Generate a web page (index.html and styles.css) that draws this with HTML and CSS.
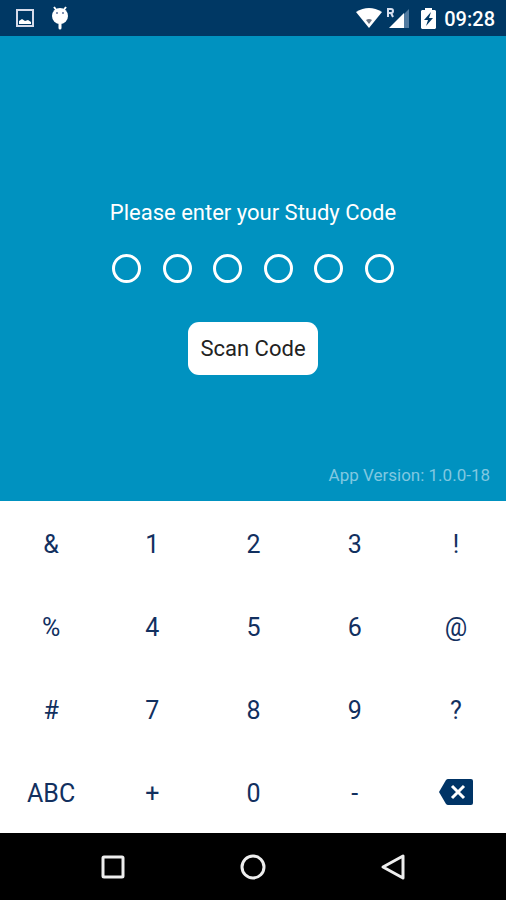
FILE: index.html
```
<!DOCTYPE html>
<html lang="en">
  <head>
    <meta charset="utf-8">
    <meta name="viewport" content="width=device-width, initial-scale=1">
    <title>Study Code</title>
    <link rel="stylesheet" href="styles.css">
  </head>
  <body>
    <header class="status-bar">
      <div class="status-group notifications">
        <svg width="18" height="18" viewBox="0 0 18 18" aria-hidden="true">
          <rect x="1" y="1" width="16" height="16" fill="none" stroke="#d6dbea" stroke-width="2" />
          <path d="M3 15v-3l3-2 3 2 3-1 3 2v2z" fill="#fff" />
        </svg>
        <svg width="18" height="24" viewBox="0 0 18 24" aria-hidden="true">
          <path d="M3 1l3 4M15 1l-3 4" stroke="#fff" stroke-width="2" />
          <circle cx="9" cy="10" r="8" fill="#fff" />
          <path d="M9 16v6" stroke="#fff" stroke-width="3" stroke-linecap="round" />
          <path d="M5 7h2M11 7h2" stroke="#8795b4" stroke-width="2" />
        </svg>
      </div>
      <div class="status-group">
        <svg width="26" height="20" viewBox="0 0 26 20" aria-hidden="true">
          <path d="M0 4Q13-4 26 4L13 20z" fill="#fff" />
          <path d="M10 12q3-2 6 0l-3 4z" fill="#6d7482" />
        </svg>
        <svg width="23" height="20" viewBox="0 0 23 20" aria-hidden="true">
          <path d="M1 9V1h3q2 0 2 2t-2 2H1M4 5l2 4" fill="none" stroke="#d6dfef" stroke-width="2" />
          <path d="M17 6l5-5v19h-5z" fill="#527ba0" />
          <path d="M2 20L17 5v15z" fill="#fff" />
        </svg>
        <svg class="battery" width="15" height="21" viewBox="0 0 15 21" aria-hidden="true">
          <path d="M1 2h3V0h7v2h3l1 1v17l-1 1H1l-1-1V3z" fill="#fff" />
          <path d="M10 4l-7 8h4l-2 6 7-8H8z" fill="#003864" />
        </svg>
        <time class="clock">09:28</time>
      </div>
    </header>

    <main class="entry">
      <h1 class="prompt">Please enter your Study Code</h1>
      <div class="slots" role="img" aria-label="0 of 6 characters entered">
        <span class="slot"></span>
        <span class="slot"></span>
        <span class="slot"></span>
        <span class="slot"></span>
        <span class="slot"></span>
        <span class="slot"></span>
      </div>
      <button class="scan" type="button">Scan Code</button>
      <p class="version">App Version: 1.0.0-18</p>
    </main>

    <section class="keypad" aria-label="Keypad">
      <button type="button">&amp;</button>
      <button type="button">1</button>
      <button type="button">2</button>
      <button type="button">3</button>
      <button type="button">!</button>
      <button type="button">%</button>
      <button type="button">4</button>
      <button type="button">5</button>
      <button type="button">6</button>
      <button type="button">@</button>
      <button type="button">#</button>
      <button type="button">7</button>
      <button type="button">8</button>
      <button type="button">9</button>
      <button type="button">?</button>
      <button type="button">ABC</button>
      <button type="button">+</button>
      <button type="button">0</button>
      <button type="button">-</button>
      <button type="button" aria-label="Delete">
        <svg width="34" height="26" viewBox="0 0 34 26">
          <path d="M9 0h23q2 0 2 2v22q0 2-2 2H9q-1 0-2-1L0 13 7 1q1-1 2-1z" fill="#003466" />
          <path d="M13 7l12 12M25 7L13 19" stroke="#fff" stroke-width="3" />
        </svg>
      </button>
    </section>

    <nav class="nav-bar" aria-label="System">
      <button type="button" aria-label="Recent apps">
        <svg width="28" height="28" viewBox="0 0 28 28">
          <rect x="4" y="4" width="20" height="20" rx="1" />
        </svg>
      </button>
      <button type="button" aria-label="Home">
        <svg width="28" height="28" viewBox="0 0 28 28">
          <circle cx="14" cy="14" r="11" />
        </svg>
      </button>
      <button type="button" aria-label="Back">
        <svg width="28" height="28" viewBox="0 0 28 28">
          <path d="M24 3v22L4 14z" />
        </svg>
      </button>
    </nav>
  </body>
</html>
```
FILE: styles.css
```
* {
  box-sizing: border-box;
}

body {
  margin: 0;
  min-height: 100vh;
  display: flex;
  flex-direction: column;
  font-family: Roboto, "Liberation Sans", sans-serif;
  background: #0092c0;
}

button {
  border: none;
  padding: 0;
  font: inherit;
  cursor: pointer;
}

svg {
  display: block;
}

.status-bar {
  height: 36px;
  padding: 0 11px 0 16px;
  display: flex;
  justify-content: space-between;
  align-items: center;
  background: #003864;
  color: #fff;
}

.status-group {
  display: flex;
  align-items: center;
  gap: 5px;
}

.notifications {
  gap: 17px;
}

.battery {
  margin: 0 3px 0 6px;
}

.clock {
  font-size: 20px;
  line-height: 24px;
  font-weight: 500;
  padding-top: 2px;
}

.entry {
  flex: 1;
  display: flex;
  flex-direction: column;
  align-items: center;
  padding: 163px 16px 14px;
  color: #fff;
}

.prompt {
  margin: 0 0 27px;
  font-size: 22px;
  line-height: 28px;
  font-weight: 400;
}

.slots {
  width: 60vw;
  display: grid;
  grid-template-columns: repeat(6, 1fr);
  justify-items: center;
  margin-bottom: 39px;
}

.slot {
  width: 29px;
  height: 29px;
  border: 3px solid #fff;
  border-radius: 50%;
}

.scan {
  padding: 12px;
  border-radius: 11px;
  background: #fff;
  color: #222;
  font-size: 22px;
  line-height: 29px;
}

.version {
  margin: auto 0 0;
  align-self: flex-end;
  font-size: 17px;
  line-height: 24px;
  color: #80c8e0;
}

.keypad {
  display: grid;
  grid-template-columns: repeat(5, 1fr);
  grid-auto-rows: 83px;
  background: #fff;
}

.keypad button {
  display: flex;
  justify-content: center;
  align-items: center;
  padding: 4px 0 0 1px;
  background: none;
  color: #12305f;
  font-size: 25px;
}

.keypad button:last-child {
  padding-top: 0;
}

.nav-bar {
  height: 67px;
  padding: 0 43px;
  display: grid;
  grid-template-columns: repeat(3, 1fr);
  background: #000;
}

.nav-bar button {
  display: flex;
  justify-content: center;
  align-items: center;
  background: none;
}

.nav-bar svg {
  fill: none;
  stroke: #eee;
  stroke-width: 3;
  stroke-linejoin: round;
}
```
